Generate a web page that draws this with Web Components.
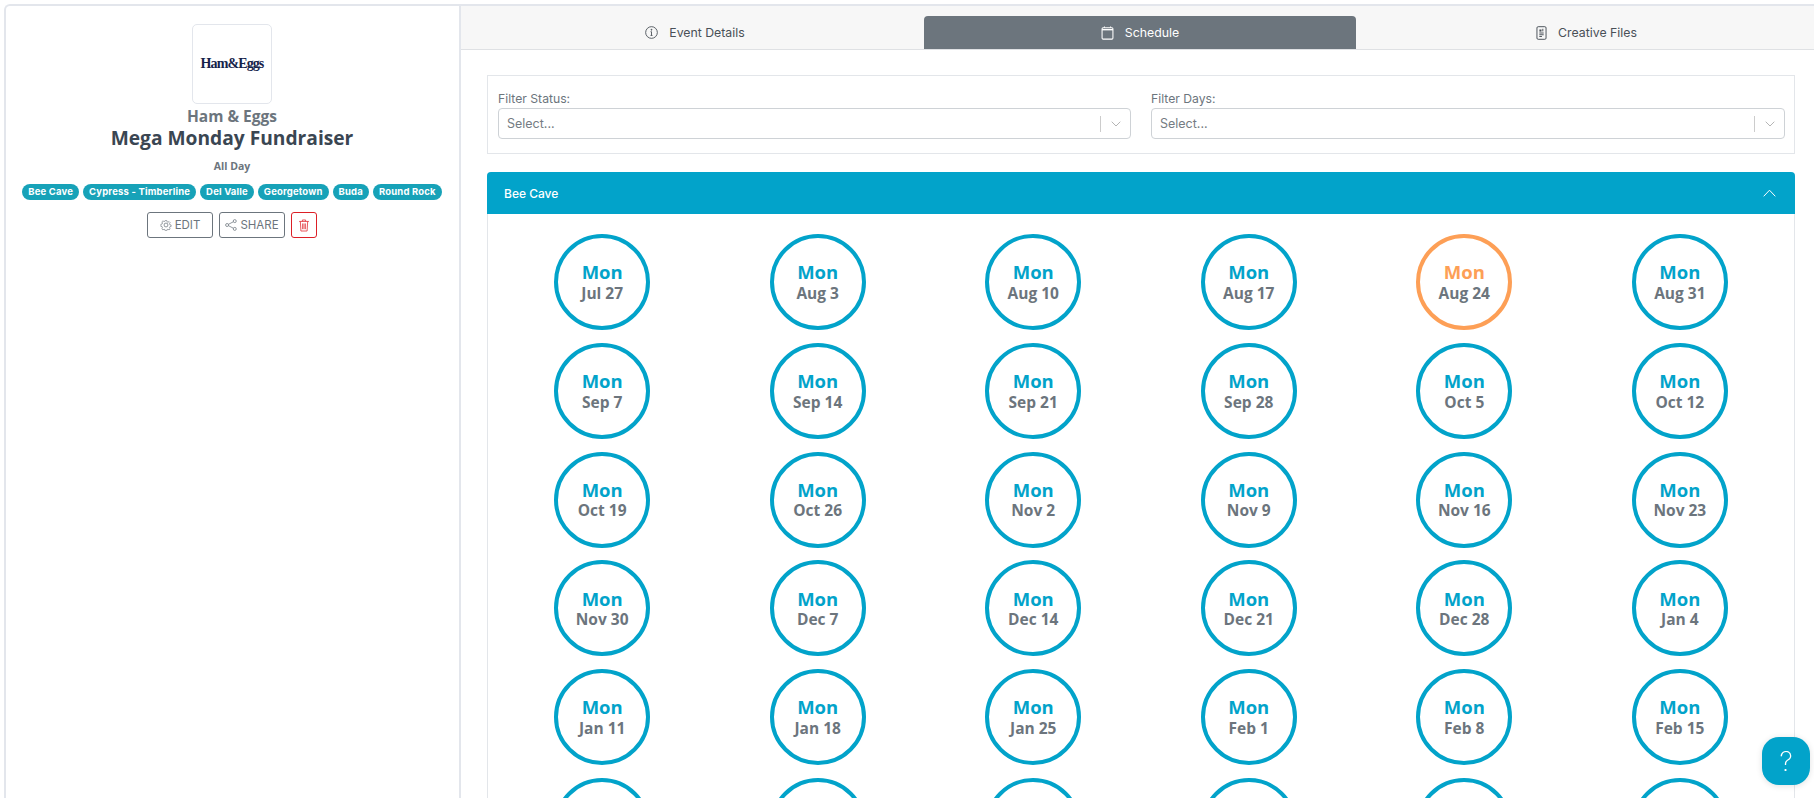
<!DOCTYPE html>
<html>
<head>
<meta charset="utf-8">
<title>Mega Monday Fundraiser</title>
<style>
  html, body { margin: 0; height: 100%; overflow: hidden; background: #fff; }
  body { font-family: "Open Sans", sans-serif; }
</style>
</head>
<body>
<event-page></event-page>

<script>
const icons = {
  gear: '<svg width="12" height="12" viewBox="0 0 16 16" fill="none" stroke="currentColor" stroke-width="1"><circle cx="8" cy="8" r="2.6"/><path d="M6.8 1h2.4l.4 2 1.5.7 1.8-1.1 1.6 1.7-1.1 1.7.6 1.6 2 .4v2.4l-2 .4-.6 1.5 1.1 1.8-1.7 1.6-1.7-1.1-1.6.6-.4 2H6.8l-.4-2-1.5-.6-1.8 1.1-1.6-1.7 1.1-1.7-.6-1.6-2-.4V6.8l2-.4.6-1.5-1.1-1.8 1.7-1.6 1.7 1.1 1.6-.6z" transform="translate(1.2 1.2) scale(.85)"/></svg>',
  share: '<svg width="12" height="12" viewBox="0 0 16 16" fill="none" stroke="currentColor" stroke-width="1"><circle cx="13" cy="2.8" r="2"/><circle cx="13" cy="13.2" r="2"/><circle cx="2.8" cy="8" r="2"/><path d="M4.6 7.1l6.6-3.4M4.6 8.9l6.6 3.4"/></svg>',
  trash: '<svg width="12" height="13" viewBox="0 0 14 16" fill="none" stroke="currentColor" stroke-width="1"><path d="M1 3h12M5 3V1.2h4V3M2.5 3l.7 11.8h7.6L11.5 3M5.3 5.5v7M7 5.5v7M8.7 5.5v7"/></svg>',
  info: '<svg width="13" height="13" viewBox="0 0 16 16" fill="none" stroke="currentColor" stroke-width="1.1"><circle cx="8" cy="8" r="7.2"/><path d="M8 7v4.6M6.8 7H8M6.8 11.6h2.4"/><circle cx="8" cy="4.6" r=".6" fill="currentColor"/></svg>',
  calendar: '<svg width="13" height="14" viewBox="0 0 14 16" fill="none" stroke="currentColor" stroke-width="1.2"><rect x=".8" y="2" width="12.4" height="13" rx="1.2"/><path d="M.8 4.2h12.4" stroke-width="1.6"/><path d="M3.5 .5v1.5M10.5 .5v1.5"/></svg>',
  file: '<svg width="11" height="14" viewBox="0 0 12 16" fill="none" stroke="currentColor" stroke-width="1.1"><rect x=".8" y=".8" width="10.4" height="14.4" rx="1.4"/><path d="M3.5 8h5M3.5 10h5M3.5 12h3"/><rect x="3.6" y="4" width="2.4" height="2.4" fill="currentColor" stroke="none"/><path d="M7.5 3.2v3"/></svg>',
  down: '<svg width="10" height="6" viewBox="0 0 10 6" fill="none" stroke="currentColor" stroke-width="1"><path d="M.7 .7L5 5l4.3-4.3"/></svg>',
  up: '<svg width="13" height="8" viewBox="0 0 13 8" fill="none" stroke="currentColor" stroke-width="1"><path d="M.7 7.3L6.5 1.2l5.8 6.1"/></svg>'
}

// Small pill that names a location
class EventChip extends HTMLElement {
  constructor () {
    super()
    this.attachShadow({ mode: 'open' }).innerHTML = `
      <style>
        :host {
          display: inline-block; height: 16px; padding: 0 6px;
          border-radius: 8px; background: #17a2b8; color: #fff;
          font: 700 9.5px/16px Inter, sans-serif; letter-spacing: .17px; white-space: nowrap;
        }
      </style>
      <slot></slot>`
  }
}

// Outlined button with an optional icon
class ActionButton extends HTMLElement {
  constructor () {
    super()
    const icon = icons[this.getAttribute('icon')] || ''
    this.attachShadow({ mode: 'open' }).innerHTML = `
      <style>
        :host {
          display: flex; align-items: center; justify-content: center; gap: 3px;
          box-sizing: border-box; width: 66px; height: 26px;
          border: 1px solid #6c757d; border-radius: 3px; color: #6c757d;
          font: 400 11.5px Inter, sans-serif;
        }
        :host([danger]) { width: 26px; border-color: #dc1f26; color: #e2323a; }
        svg { display: block; }
      </style>
      ${icon}<slot></slot>`
  }
}

class EventSidebar extends HTMLElement {
  constructor () {
    super()
    this.attachShadow({ mode: 'open' }).innerHTML = `
      <style>
        :host {
          display: block; box-sizing: border-box; width: 455px; height: 900px;
          border: 2px solid #e3e6ec; border-right: 0; border-radius: 6px 0 0 0;
          padding: 18px 1px 0 0; text-align: center;
        }
        .logo {
          box-sizing: border-box; width: 80px; height: 80px; margin: 0 auto;
          border: 1px solid #e3e6ec; border-radius: 5px;
          display: flex; align-items: center; justify-content: center;
          font: 700 14px "Liberation Serif", serif; letter-spacing: -.9px; color: #15224a;
        }
        .brand { margin-top: 1px; font: 700 15.5px/22px "Open Sans", sans-serif; color: #6c757d; }
        .name { margin-top: -1px; font: 700 19.2px/24px "Open Sans", sans-serif; color: #3a4652; }
        .time { margin-top: 8px; font: 700 10.5px/16px "Open Sans", sans-serif; color: #6c757d; }
        .chips { display: flex; justify-content: center; gap: 4px; margin-top: 10px; }
        .actions { display: flex; justify-content: center; gap: 6px; margin-top: 12px; }
      </style>
      <div class="logo">Ham&amp;Eggs</div>
      <div class="brand">Ham &amp; Eggs</div>
      <div class="name">Mega Monday Fundraiser</div>
      <div class="time">All Day</div>
      <div class="chips">
        <event-chip>Bee Cave</event-chip>
        <event-chip>Cypress - Timberline</event-chip>
        <event-chip>Del Valle</event-chip>
        <event-chip>Georgetown</event-chip>
        <event-chip>Buda</event-chip>
        <event-chip>Round Rock</event-chip>
      </div>
      <div class="actions">
        <action-button icon="gear">EDIT</action-button>
        <action-button icon="share">SHARE</action-button>
        <action-button icon="trash" danger></action-button>
      </div>`
  }
}

class TabItem extends HTMLElement {
  constructor () {
    super()
    const icon = icons[this.getAttribute('icon')] || ''
    this.attachShadow({ mode: 'open' }).innerHTML = `
      <style>
        :host {
          display: flex; align-items: center; justify-content: center; gap: 11px;
          color: #495057; font: 400 12.3px Inter, sans-serif;
        }
        :host([active]) { background: #6c757d; color: #fff; border-radius: 4px 4px 0 0; }
        svg { display: block; }
      </style>
      ${icon}<slot></slot>`
  }
}

class TabBar extends HTMLElement {
  constructor () {
    super()
    this.attachShadow({ mode: 'open' }).innerHTML = `
      <style>
        :host {
          display: grid; grid-template-columns: 463px 432px 1fr;
          box-sizing: border-box; height: 44px; padding-top: 10px;
          background: #f7f7f7; border-bottom: 1px solid #dfe1e4;
        }
      </style>
      <slot></slot>`
  }
}

// Select box the way react-select draws it when empty
class FilterSelect extends HTMLElement {
  constructor () {
    super()
    this.attachShadow({ mode: 'open' }).innerHTML = `
      <style>
        :host { display: block; font-family: Inter, sans-serif; }
        label { display: block; font-size: 12.2px; line-height: 16px; color: #6c757d; margin-bottom: 1px; }
        .control {
          box-sizing: border-box; height: 31px; display: flex; align-items: center;
          border: 1px solid #ced2d6; border-radius: 4px; padding-left: 8px;
          font-size: 12.5px; color: #757c83;
        }
        .value { flex: 1; }
        .sep { width: 1px; height: 16px; background: #ccc; }
        .arrow { width: 29px; display: flex; justify-content: center; color: #b5b5b5; }
        svg { display: block; }
      </style>
      <label>${this.getAttribute('label')}</label>
      <div class="control">
        <span class="value">Select...</span>
        <span class="sep"></span>
        <span class="arrow">${icons.down}</span>
      </div>`
  }
}

class FilterBar extends HTMLElement {
  constructor () {
    super()
    this.attachShadow({ mode: 'open' }).innerHTML = `
      <style>
        :host {
          display: grid; grid-template-columns: 633px 634px; gap: 20px;
          box-sizing: border-box; height: 79px; padding: 15px 10px 0;
          border: 1px solid #e3e6ea;
        }
      </style>
      <slot></slot>`
  }
}

class DateCircle extends HTMLElement {
  constructor () {
    super()
    const day = this.getAttribute('day') || ''
    const date = this.getAttribute('date') || ''
    this.attachShadow({ mode: 'open' }).innerHTML = `
      <style>
        :host { display: flex; justify-content: center; --ring: #02a3ca; }
        :host([pending]) { --ring: #fd9f56; }
        .ring {
          box-sizing: border-box; width: 96px; height: 96px; border-radius: 50%;
          border: 4px solid var(--ring); display: flex; flex-direction: column;
          align-items: center; justify-content: center;
          font-family: "Open Sans", sans-serif; font-weight: 700;
        }
        .day { font-size: 18.5px; line-height: 21.5px; color: var(--ring); }
        .date { font-size: 15.5px; line-height: 20px; color: #6c757d; white-space: nowrap; }
      </style>
      <div class="ring">
        <span class="day">${day}</span>
        <span class="date">${date}</span>
      </div>`
  }
}

class LocationPanel extends HTMLElement {
  constructor () {
    super()
    this.attachShadow({ mode: 'open' }).innerHTML = `
      <style>
        :host { display: block; box-sizing: border-box; border: 1px solid #e3e6ea; border-top: 0; border-radius: 4px 4px 0 0; }
        header {
          display: flex; align-items: center; justify-content: space-between;
          height: 42px; margin: 0 -1px; padding: 0 19px 0 17px;
          background: #02a3ca; color: #fff; border-radius: 4px 4px 0 0;
          font: 500 12px Inter, sans-serif;
        }
        header svg { display: block; }
        .grid {
          display: grid; grid-template-columns: repeat(6, 1fr); row-gap: 12.75px;
          padding: 20px 6.4px;
        }
      </style>
      <header><span>${this.getAttribute('name')}</span>${icons.up}</header>
      <div class="grid"><slot></slot></div>`
  }
}

class HelpButton extends HTMLElement {
  constructor () {
    super()
    this.attachShadow({ mode: 'open' }).innerHTML = `
      <style>
        :host {
          position: fixed; left: 1762px; top: 737px; width: 48px; height: 48px;
          display: flex; align-items: center; justify-content: center;
          background: #02a3ca; color: #fff; border-radius: 17px;
          box-shadow: 0 1px 6px rgba(0,0,0,.12);
          font: 200 27px Inter, sans-serif;
        }
      </style>
      ?`
  }
}

class EventPage extends HTMLElement {
  constructor () {
    super()
    const dates = ['Jul 27', 'Aug 3', 'Aug 10', 'Aug 17', 'Aug 24', 'Aug 31',
      'Sep 7', 'Sep 14', 'Sep 21', 'Sep 28', 'Oct 5', 'Oct 12',
      'Oct 19', 'Oct 26', 'Nov 2', 'Nov 9', 'Nov 16', 'Nov 23',
      'Nov 30', 'Dec 7', 'Dec 14', 'Dec 21', 'Dec 28', 'Jan 4',
      'Jan 11', 'Jan 18', 'Jan 25', 'Feb 1', 'Feb 8', 'Feb 15']
    const circles = dates.map(d =>
      `<date-circle day="Mon" date="${d}"${d === 'Aug 24' ? ' pending' : ''}></date-circle>`).join('')
    // the sixth row only shows the top of its rings above the fold
    const fold = '<date-circle></date-circle>'.repeat(6)
    this.attachShadow({ mode: 'open' }).innerHTML = `
      <style>
        :host { display: flex; padding: 4px 0 0 4px; height: 794px; overflow: hidden; }
        event-sidebar { flex: none; }
        .main { flex: 1; min-width: 0; border: 2px solid #e3e6ec; border-width: 2px 0 0 2px; height: 900px; }
        .content { padding: 25px 19px 0 26px; }
        tab-item:first-child { padding-left: 5px; }
        tab-item:last-child { padding-left: 3px; }
        location-panel { margin-top: 18px; }
      </style>
      <event-sidebar></event-sidebar>
      <div class="main">
        <tab-bar>
          <tab-item icon="info">Event Details</tab-item>
          <tab-item icon="calendar" active>Schedule</tab-item>
          <tab-item icon="file">Creative Files</tab-item>
        </tab-bar>
        <div class="content">
          <filter-bar>
            <filter-select label="Filter Status:"></filter-select>
            <filter-select label="Filter Days:"></filter-select>
          </filter-bar>
          <location-panel name="Bee Cave">${circles}${fold}</location-panel>
        </div>
      </div>
      <help-button></help-button>`
  }
}

// children first so their constructors exist when the page renders
customElements.define('event-chip', EventChip)
customElements.define('action-button', ActionButton)
customElements.define('event-sidebar', EventSidebar)
customElements.define('tab-item', TabItem)
customElements.define('tab-bar', TabBar)
customElements.define('filter-select', FilterSelect)
customElements.define('filter-bar', FilterBar)
customElements.define('date-circle', DateCircle)
customElements.define('location-panel', LocationPanel)
customElements.define('help-button', HelpButton)
customElements.define('event-page', EventPage)
</script>
</body>
</html>
